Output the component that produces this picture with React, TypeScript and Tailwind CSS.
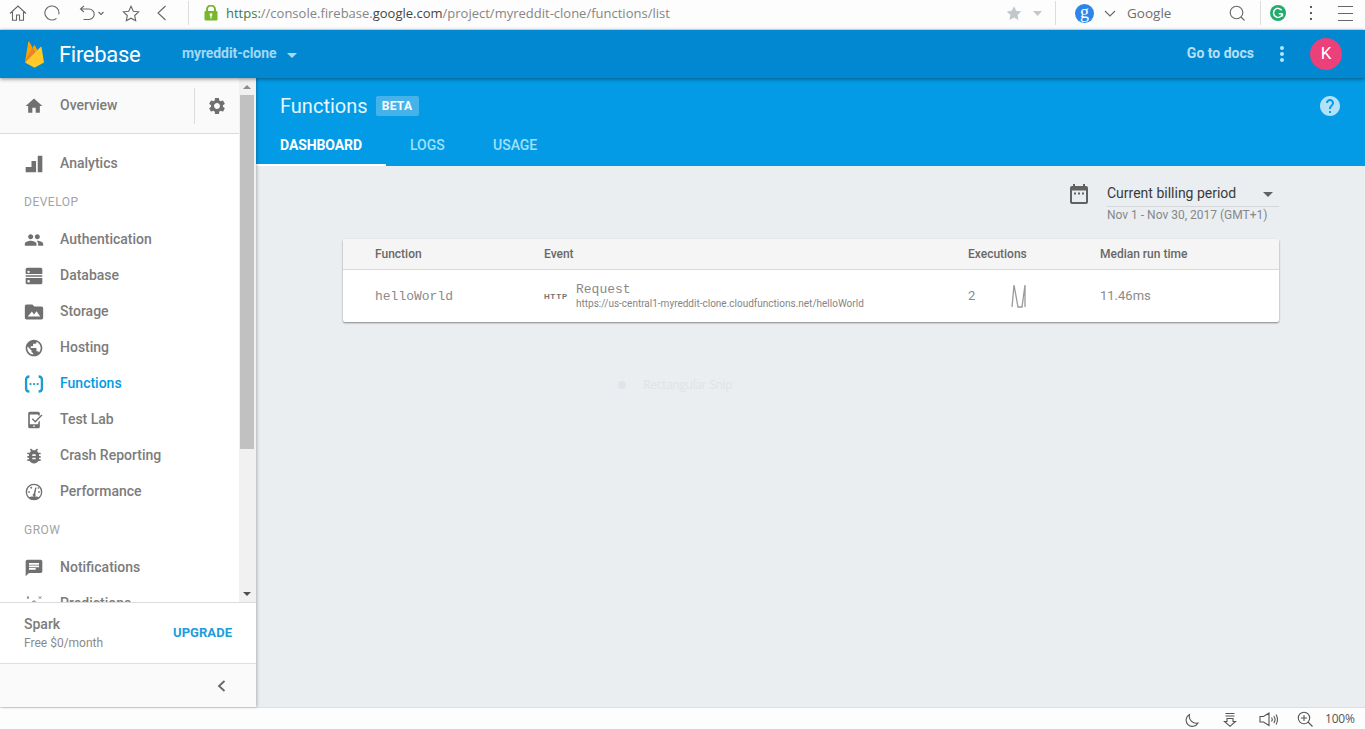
import type { ReactNode } from "react";
import {
  MdArrowDropDown,
  MdBugReport,
  MdChat,
  MdGroup,
  MdHelp,
  MdHome,
  MdMoreVert,
  MdPublic,
  MdSettings,
} from "react-icons/md";

function Divider({ className }: { className: string }) {
  return <div className={`h-6 w-px shrink-0 bg-[#dcdcdc] ${className}`} />;
}

function Line({ w, h, className = "", children }: { w: number; h: number; className?: string; children: ReactNode }) {
  return (
    <svg width={w} height={h} viewBox={`0 0 ${w} ${h}`} fill="none" stroke="currentColor" strokeWidth="1.1" className={`shrink-0 ${className}`}>
      {children}
    </svg>
  );
}

function BrowserBar() {
  return (
    <div className="flex h-[30px] shrink-0 items-start border-b border-[#dfe6ea] bg-[#fdfdfd] text-[#666]">
      <div className="flex h-[26px] w-full items-center">
        <Line w={18} h={16} className="ml-[9px]">
          <path d="M1 8.500 9 1l8 7.500M3.500 7v8.300h4V10h3v5.300h4V7" />
        </Line>
        <Line w={16} h={16} className="ml-[17px]">
          <path d="M12.500 13.300a7 7 0 1 1 2.300-4" />
        </Line>
        <Line w={17} h={16} className="ml-[19px]">
          <path d="M5 0.800 1.500 4 5 7.200M1.500 4H10a5 5 0 0 1 0 10.500H4.500" />
        </Line>
        <Line w={6} h={5} className="ml-[2px]">
          <path d="m.5 1 2.500 2.500L5.500 1" />
        </Line>
        <Line w={18} h={17} className="ml-[18px]">
          <path d="m9 1.300 2.300 4.900 5.300.6-3.900 3.700 1 5.300L9 13.200l-4.700 2.600 1-5.300-3.900-3.700 5.300-.6Z" />
        </Line>
        <Line w={11} h={16} className="ml-[16px]">
          <path d="M9.500 1 2 8l7.500 7" />
        </Line>
        <Divider className="ml-[21px]" />
        <svg width="14" height="16" viewBox="0 0 14 16" className="ml-[15px] shrink-0">
          <path d="M3 7V4.500a4 4 0 0 1 8 0V7" fill="none" stroke="#76b82a" strokeWidth="2" />
          <rect x="0.500" y="6" width="13" height="9.500" rx="1" fill="#76b82a" />
          <circle cx="7" cy="9.700" r="1.400" fill="#fff" />
          <path d="M6.400 10h1.200v3.400H6.400z" fill="#fff" />
        </svg>
        <div className="ml-[8px] w-[780px] whitespace-nowrap font-['Open_Sans',sans-serif] text-[13px] leading-5 text-[#858585]">
          <span className="text-[#3c7a4c]">https:</span>//console.firebase.<span className="text-[#454545]">google.com</span>
          /project/myreddit-clone/functions/list
        </div>
        <svg width="16" height="16" viewBox="0 0 18 17" className="shrink-0 fill-[#c3c6cc]">
          <path d="m9 .8 2.500 5.300 5.700.7-4.200 4 1.100 5.700L9 13.700l-5.100 2.800L5 10.800l-4.200-4 5.700-.7Z" />
        </svg>
        <svg width="9" height="5" viewBox="0 0 9 5" className="ml-[11px] shrink-0 fill-[#c3c6cc]">
          <path d="M0 0h9L4.500 5Z" />
        </svg>
        <Divider className="ml-[13px]" />
        <div className="ml-[19px] flex size-[19px] shrink-0 items-center justify-center rounded-full bg-[#2b86e8] pb-[3px] font-['Liberation_Serif',serif] text-[18px] leading-none text-white">
          g
        </div>
        <Line w={12} h={7} className="ml-[10px]">
          <path d="m1 1 5 5 5-5" />
        </Line>
        <div className="ml-[11px] w-[102px] font-['Open_Sans',sans-serif] text-[13.500px] leading-5 text-[#6e6e6e]">Google</div>
        <Line w={17} h={17}>
          <circle cx="7.500" cy="7.500" r="6.300" />
          <path d="m12 12 3.500 3.500" />
        </Line>
        <Divider className="ml-[14px]" />
        <svg width="16" height="16" viewBox="0 0 16 16" className="ml-[9px] shrink-0">
          <circle cx="8" cy="8" r="8" fill="#22ab6b" />
          <path d="M11.700 5.300A4.500 4.500 0 1 0 12.200 9.500M12.500 8.700H8.800M12.400 8.500v3" fill="none" stroke="#fff" strokeWidth="1.500" />
        </svg>
        <svg width="2" height="14" viewBox="0 0 2 14" className="ml-[24px] shrink-0 fill-[#5c5c5c]">
          <path d="M0 0h2v2H0zM0 6h2v2H0zM0 12h2v2H0z" />
        </svg>
        <Line w={15} h={16} className="ml-[26px]">
          <path d="M0 1.500h15M0 8.500h15M0 15.500h15" />
        </Line>
      </div>
    </div>
  );
}

function FirebaseLogo() {
  return (
    <svg width="19" height="27" viewBox="5.8 2 20.400 28" className="shrink-0">
      <path d="M5.800 24.600 9.245 2.554a.656.656 0 0 1 1.227-.206L14 9Z" fill="#ffa000" />
      <path d="m16.584 14.010 2.632-2.700-2.633-5.021a.678.678 0 0 0-1.195 0L13.981 8.971Z" fill="#ffa000" />
      <path d="m5.802 24.601 10.700-10.600L13.989 8.956Z" fill="#f58220" />
      <path d="m16.912 29.756 9.288-5.179-2.654-16.331A.635.635 0 0 0 22.471 7.900L5.800 24.600l9.233 5.155a1.927 1.927 0 0 0 1.878 0" fill="#ffca28" />
    </svg>
  );
}

function AppHeader() {
  return (
    <header className="relative z-20 flex h-12 shrink-0 items-center bg-[#0288d1] shadow-[0_1px_4px_rgba(0,0,0,0.450)]">
      <div className="ml-[25px] flex items-center">
        <FirebaseLogo />
        <span className="ml-[15px] w-[123px] pt-[2px] text-[22px] leading-6 tracking-[-0.300px] text-white">Firebase</span>
      </div>
      <span className="pb-[2px] text-[14px] font-bold leading-5 tracking-[-0.100px] text-[#a0d8f5]">myreddit-clone</span>
      <MdArrowDropDown className="ml-[4px] mt-[2px] size-6 text-[#a5dbf7]" />
      <span className="ml-auto pb-[2px] text-[14px] font-bold leading-5 text-[#b3e0f7]">Go to docs</span>
      <MdMoreVert className="ml-[16px] size-6 text-[#b3e5fc]" />
      <div className="ml-[16px] mr-[23px] flex size-8 items-center justify-center rounded-full bg-[#ec407a] text-[17px] text-white">K</div>
    </header>
  );
}

function Glyph({ children }: { children: ReactNode }) {
  return (
    <svg viewBox="0 0 24 24" fill="currentColor" className="size-5">
      {children}
    </svg>
  );
}

const analyticsIcon = (
  <Glyph>
    <path d="M16.500 2H22v20h-5.500zM9 8.500h5.500V22H2v-6.500h7z" />
  </Glyph>
);
const databaseIcon = (
  <Glyph>
    <path fillRule="evenodd" d="M4 2h16a2 2 0 0 1 2 2v5.500H2V4a2 2 0 0 1 2-2ZM2 11h20v2H2ZM2 14.500h20V20a2 2 0 0 1-2 2H4a2 2 0 0 1-2-2Zm3.500 2.300a1.500 1.500 0 1 0 0 3 1.500 1.500 0 0 0 0-3Z" />
    <circle cx="5.500" cy="7" r="1.400" fill="#fff" />
  </Glyph>
);
const storageIcon = (
  <Glyph>
    <path fillRule="evenodd" d="M3 3h7l2.500 2.500H21a2 2 0 0 1 2 2V19a2 2 0 0 1-2 2H3a2 2 0 0 1-2-2V5a2 2 0 0 1 2-2Zm1.500 14.500h15L15 11l-3 4-2.500-3.500Z" />
  </Glyph>
);
const functionsIcon = (
  <Glyph>
    <path d="M6.500 3Q2.500 3 2.500 7v10q0 4 4 4M17.500 3q4 0 4 4v10q0 4-4 4" fill="none" stroke="currentColor" strokeWidth="2.800" />
    <circle cx="7.700" cy="12" r="1.350" />
    <circle cx="12" cy="12" r="1.350" />
    <circle cx="16.300" cy="12" r="1.350" />
  </Glyph>
);
const testLabIcon = (
  <Glyph>
    <path fillRule="evenodd" d="M7 2h10a2 2 0 0 1 2 2v2.500h-2V5.500H7V17h10v-2l2-2.300V20a2 2 0 0 1-2 2H7a2 2 0 0 1-2-2V4a2 2 0 0 1 2-2Zm4 16.500V20.200h2v-1.700Z" />
    <path d="m10 10.500 3.500 3.500 8-8" fill="none" stroke="currentColor" strokeWidth="1.700" />
  </Glyph>
);
const performanceIcon = (
  <Glyph>
    <circle cx="12" cy="12" r="9.200" fill="none" stroke="currentColor" strokeWidth="1.600" />
    <path d="M5.500 18.500Q12 15.500 18.500 18.500 12 24.500 5.500 18.500ZM13.500 6.500l1.500.4-1.500 7.600a1.700 1.700 0 1 1-2-.4ZM5 11h2v2H5zM17 11h2v2h-2zM7.200 6.800l1.400-1.300 1.400 1.500-1.400 1.300zM16 7l1.300-1 1 1.500-1.300 1z" />
  </Glyph>
);
const predictionsIcon = (
  <Glyph>
    <path d="m3.500 3 2.500 2.500M6 3 3.500 5.500M18 3l2.500 2.500m0-2.500L18 5.500M9 10.500l3-2.500 3 2.500M3 18l5-7.500M16 10.500 21 18" fill="none" stroke="currentColor" strokeWidth="1.200" />
  </Glyph>
);

function NavItem({ icon, label, active = false }: { icon: ReactNode; label: string; active?: boolean }) {
  return (
    <a className={`flex h-9 items-center pl-6 text-[14px] font-medium leading-5 ${active ? "text-[#039be5]" : "text-[#7c7c7c]"}`}>
      <span className={`mr-4 mt-[2px] ${active ? "text-[#1e9bcf]" : "text-[#707070]"}`}>{icon}</span>
      {label}
    </a>
  );
}

function NavHeading({ children }: { children: ReactNode }) {
  return <div className="flex h-10 items-center pl-6 pt-[2px] text-[12px] leading-4 tracking-[0.500px] text-[#a3a3a3]">{children}</div>;
}

function Sidebar() {
  return (
    <aside className="relative z-10 flex w-64 shrink-0 flex-col bg-white shadow-[1px_0_3px_rgba(0,0,0,0.250)]">
      <div className="flex h-[524px] overflow-hidden">
        <div className="w-[239px]">
          <div className="flex h-14 items-center border-b border-[#dcdcdc] bg-[#fafafa] pl-6 text-[14px] font-medium text-[#7c7c7c]">
            <MdHome className="mt-[1px] size-5 text-[#707070]" />
            <span className="ml-4 w-[134px] pb-[2px] leading-5">Overview</span>
            <div className="h-9 w-px bg-[#dcdcdc]" />
            <MdSettings className="ml-[12px] mt-[1px] size-5 text-[#707070]" />
          </div>
          <nav className="pt-[11px]">
            <NavItem icon={analyticsIcon} label="Analytics" />
            <NavHeading>DEVELOP</NavHeading>
            <NavItem icon={<MdGroup className="size-5" />} label="Authentication" />
            <NavItem icon={databaseIcon} label="Database" />
            <NavItem icon={storageIcon} label="Storage" />
            <NavItem icon={<MdPublic className="size-5" />} label="Hosting" />
            <NavItem icon={functionsIcon} label="Functions" active />
            <NavItem icon={testLabIcon} label="Test Lab" />
            <NavItem icon={<MdBugReport className="size-5" />} label="Crash Reporting" />
            <NavItem icon={performanceIcon} label="Performance" />
            <NavHeading>GROW</NavHeading>
            <NavItem icon={<MdChat className="size-5" />} label="Notifications" />
            <NavItem icon={predictionsIcon} label="Predictions" />
          </nav>
        </div>
        <div className="flex w-[17px] flex-col items-center bg-[#f1f1f1] pr-px">
          <svg width="8" height="4" viewBox="0 0 8 4" className="mt-[7px] fill-[#8c8c8c]">
            <path d="M0 4h8L4 0Z" />
          </svg>
          <div className="mt-[6px] h-[354px] w-[14px] bg-[#c1c1c1]" />
          <svg width="8" height="4" viewBox="0 0 8 4" className="mb-[6px] mt-auto fill-[#505050]">
            <path d="M0 0h8L4 4Z" />
          </svg>
        </div>
      </div>
      <div className="flex h-[61px] items-center justify-between border-t border-[#dcdcdc] pl-6 pr-6">
        <div className="pb-px">
          <div className="text-[14px] font-medium leading-5 text-[#7c7c7c]">Spark</div>
          <div className="pt-px text-[12px] leading-[17px] text-[#8a8a8a]">Free $0/month</div>
        </div>
        <span className="text-[13px] font-bold leading-5 tracking-[0.050px] text-[#1c9cdb]">UPGRADE</span>
      </div>
      <div className="flex flex-1 items-center justify-end border-t border-[#e0e0e0] bg-[#fafafa] pr-[30px]">
        <svg width="9" height="12" viewBox="0 0 9 12" fill="none" stroke="#666" strokeWidth="1.800">
          <path d="M7.500 1 2 6l5.500 5" />
        </svg>
      </div>
    </aside>
  );
}

function PageHeader() {
  return (
    <div className="flex h-[88px] shrink-0 flex-col justify-between bg-[#039be5]">
      <div className="flex h-[47px] items-center pl-6 pr-[23px] pt-[9px]">
        <h1 className="w-[96px] text-[20px] leading-6 text-[#e6f7ff]">Functions</h1>
        <span className="flex h-5 w-[43px] items-center justify-center rounded-[2px] bg-[#45b3ea] pr-px text-[12px] font-bold tracking-[0.300px] text-white">BETA</span>
        <MdHelp className="ml-auto size-6 text-[#b3e1f7]" />
      </div>
      <div className="flex h-[41px] text-[14px] font-bold text-[#a0e0fa]">
        <div className="flex w-[130px] justify-center border-b-2 border-white pt-[10px] leading-5 tracking-[-0.100px] text-white">DASHBOARD</div>
        <div className="ml-6 w-[83px] pt-[10px] font-medium leading-5">LOGS</div>
        <div className="pt-[10px] font-medium leading-5">USAGE</div>
      </div>
    </div>
  );
}

function PeriodPicker() {
  return (
    <div className="flex h-[73px] pl-[814px]">
      <svg width="18" height="21" viewBox="0 0 18 21" className="mt-[18px] shrink-0 fill-[#616161]">
        <path fillRule="evenodd" d="M3 0h2v2h8V0h2v2h1a2 2 0 0 1 2 2v14a2 2 0 0 1-2 2H2a2 2 0 0 1-2-2V4a2 2 0 0 1 2-2h1Zm-1 6.500V18h14V6.500Zm2 2h2v2H4Zm4 0h2v2H8Zm4 0h2v2h-2Z" />
      </svg>
      <div className="ml-[19px] w-[172px] pt-[15px]">
        <div className="flex h-[26px] justify-between border-b border-[#d5d8da] pr-[6px] pt-[2px] text-[14px] leading-5 text-[#3a3a3a]">
          Current billing period
          <svg width="10" height="5" viewBox="0 0 10 5" className="mt-[9px] fill-[#616161]">
            <path d="M0 0h10L5 5Z" />
          </svg>
        </div>
        <div className="whitespace-nowrap text-[12px] leading-[17px] text-[#858789]">Nov 1 - Nov 30, 2017 (GMT+1)</div>
      </div>
    </div>
  );
}

const columns = "grid grid-cols-[169px_424px_132px_1fr] pl-8";

function FunctionsTable() {
  return (
    <div className="ml-[87px] w-[936px] overflow-hidden rounded-[2px] bg-white shadow-[0_1px_2px_rgba(0,0,0,0.450)]">
      <div className={`${columns} h-[31px] items-center border-b border-[#dadada] bg-[#f5f5f5] text-[12px] font-medium leading-4 text-[#686868]`}>
        <span>Function</span>
        <span>Event</span>
        <span>Executions</span>
        <span>Median run time</span>
      </div>
      <div className={`${columns} h-[52px] items-center text-[13px] text-[#8a8a8a]`}>
        <span className="pt-[2px] font-['Liberation_Mono',monospace] text-[13px]">helloWorld</span>
        <div className="flex items-center">
          <span className="w-8 pt-[2px] text-[8px] font-bold tracking-[0.800px] text-[#757575]">HTTP</span>
          <div>
            <div className="font-['Liberation_Mono',monospace] text-[13px] leading-[15px]">Request</div>
            <div className="text-[10px] leading-[14px] text-[#858585]">https://us-central1-myreddit-clone.cloudfunctions.net/helloWorld</div>
          </div>
        </div>
        <div className="flex items-center">
          <span className="w-[43px]">2</span>
          <svg width="16" height="26" viewBox="0 0 16 26" fill="none" stroke="#9a9a9a" strokeWidth="1.300">
            <path d="M1 24 3 2l4 22h4l3-22v22" />
          </svg>
        </div>
        <span>11.46ms</span>
      </div>
    </div>
  );
}

function SnipHint() {
  return (
    <div className="ml-[362px] mt-[53px] flex items-center text-[12px] leading-5 text-[#dfe3e6]">
      <span className="mr-[17px] size-2 rounded-full bg-[#dfe4ea]" />
      <span className="font-['Open_Sans',sans-serif] tracking-[-0.300px]">Rectangular Snip</span>
    </div>
  );
}

function StatusBar() {
  return (
    <footer className="flex h-[22px] shrink-0 items-center border-t border-[#dcdfe2] bg-[#fdfdfd] text-[#555]">
      <Line w={15} h={15} className="ml-[1184px] mt-[3px]">
        <path d="M5.500 1.500A6.300 6.300 0 1 0 14 10 7 7 0 0 1 5.500 1.500Z" />
      </Line>
      <Line w={14} h={15} className="ml-[24px] mt-[2px]">
        <path d="M2.500 1.500h9M2.500 4h9M4 6.500h6v3h2.500L7 14.300 1.500 9.500H4Z" />
      </Line>
      <Line w={20} h={15} className="ml-[22px] mt-[2px]">
        <path d="M1 4.500h3.500L10 1v12.500L4.500 10H1ZM12.500 5.500q1.500 2 0 4M14.800 4q2.500 3.500 0 7M17 2.500q3 5 0 10" />
      </Line>
      <Line w={17} h={17} className="ml-[18px] mt-[2px]">
        <circle cx="7" cy="7" r="5.700" />
        <path d="m11 11 4.500 4.500M4 7h6M7 4v6" />
      </Line>
      <span className="ml-[11px] font-['Open_Sans',sans-serif] text-[12px] leading-5 tracking-[-0.200px]">100%</span>
    </footer>
  );
}

export default function App() {
  return (
    <div className="flex h-[729px] w-[1365px] flex-col overflow-hidden bg-white font-['Roboto',sans-serif]">
      <BrowserBar />
      <AppHeader />
      <div className="flex h-[629px] shrink-0">
        <Sidebar />
        <main className="flex flex-1 flex-col bg-[#eaeef1]">
          <PageHeader />
          <PeriodPicker />
          <FunctionsTable />
          <SnipHint />
        </main>
      </div>
      <StatusBar />
    </div>
  );
}
